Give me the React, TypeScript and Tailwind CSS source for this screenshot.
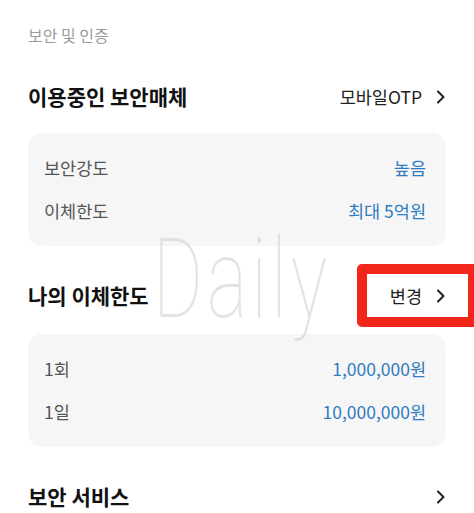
const font = { fontFamily: '"Noto Sans CJK KR", "Noto Sans", sans-serif' };

function Chevron() {
  return (
    <svg width="10" height="14" viewBox="0 0 10 14" className="shrink-0">
      <path d="M2 1.5 L7.5 7 L2 12.5" fill="none" stroke="#222" strokeWidth="2" strokeLinecap="round" strokeLinejoin="round" />
    </svg>
  );
}

function InfoCard({ rows }: { rows: [string, string][] }) {
  return (
    <div className="rounded-[14px] bg-[#f6f6f7] pl-[16px] pr-[20px] py-[23px] flex flex-col gap-[19px]">
      {rows.map(([label, value]) => (
        <div key={label} className="flex items-center justify-between text-[17.5px] leading-[24px]">
          <span className="text-[#555]">{label}</span>
          <span className="text-[#2f7cc0]">{value}</span>
        </div>
      ))}
    </div>
  );
}

export default function App() {
  return (
    <div className="relative w-[474px] h-[513px] overflow-hidden bg-white px-[28px] pt-[23px]" style={font}>
      <div className="text-[16px] leading-[24px] text-[#9b9b9b]">보안 및 인증</div>

      <div className="mt-[36px] h-[28px] flex items-center justify-between">
        <span className="text-[21px] font-bold text-[#111]">이용중인 보안매체</span>
        <span className="flex items-center gap-[14px] text-[17.5px] text-[#222]">
          모바일OTP
          <Chevron />
        </span>
      </div>
      <div className="mt-[22px]">
        <InfoCard rows={[['보안강도', '높음'], ['이체한도', '최대 5억원']]} />
      </div>

      <div className="relative mt-[36px] h-[28px] flex items-center justify-between">
        <span className="text-[21px] font-bold text-[#111]">나의 이체한도</span>
        <span className="relative z-10 flex items-center gap-[14px] text-[17.5px] text-[#222]">
          변경
          <Chevron />
        </span>
        <div className="absolute left-[329px] top-[-18px] w-[121px] h-[63px] rounded-[5px] border-[10px] border-[#f2261b]" />
      </div>
      <div className="mt-[24px]">
        <InfoCard rows={[['1회', '1,000,000원'], ['1일', '10,000,000원']]} />
      </div>

      <div className="mt-[36px] h-[28px] flex items-center justify-between">
        <span className="text-[21px] font-bold text-[#111]">보안 서비스</span>
        <Chevron />
      </div>

      {/* watermark */}
      <div
        className="pointer-events-none absolute left-[153px] top-[223px] text-[112px] font-thin leading-none text-[#d8d8d8] opacity-70 scale-x-[0.68] origin-left tracking-[6px]"
        style={{ fontFamily: 'Roboto, "DejaVu Sans", sans-serif' }}
      >
        Daily
      </div>
    </div>
  );
}
